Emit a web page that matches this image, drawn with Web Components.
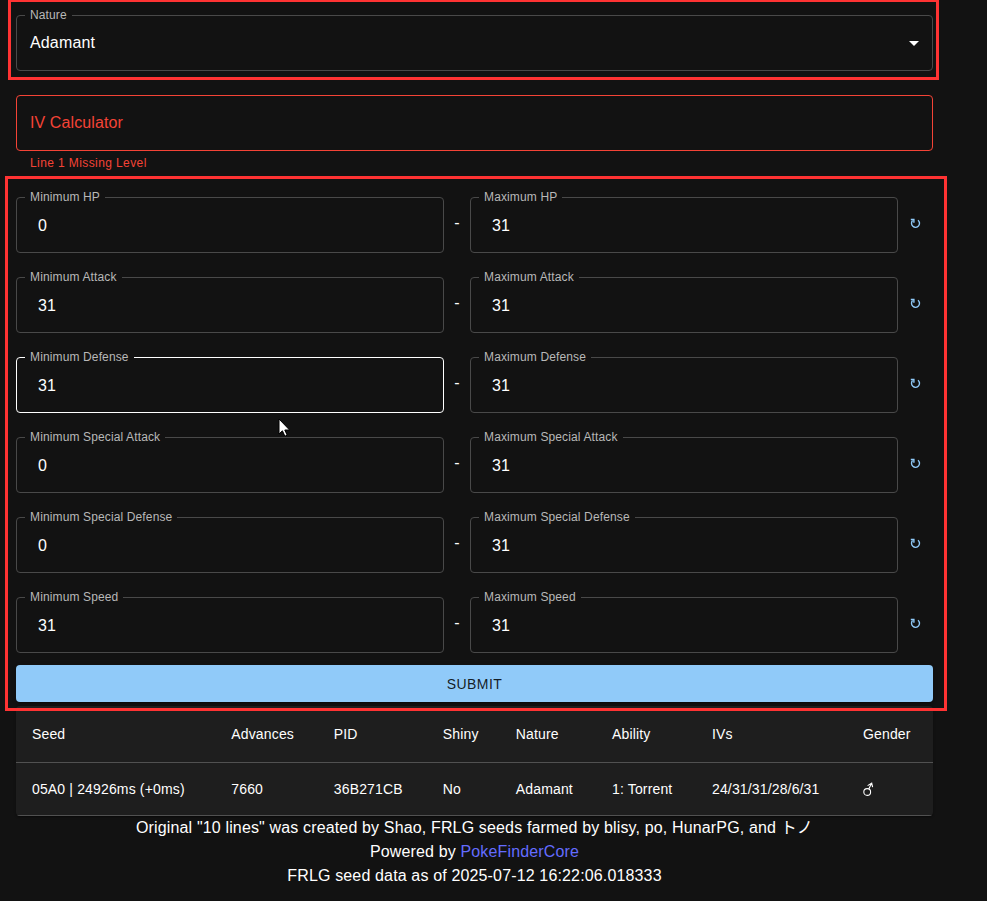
<!DOCTYPE html>
<html lang="en">
<head>
<meta charset="utf-8">
<title>Seed search</title>
<style>
html,body{margin:0;height:100%;background:#121212;overflow:hidden}
body{font-family:"Liberation Sans","Noto Sans CJK JP",sans-serif;font-size:16px;color:#fff}
</style>
</head>
<body>
<seed-app></seed-app>
<script>
const define = (name, render) => customElements.define(name, class extends HTMLElement {
  connectedCallback() {
    if (this.shadowRoot) return;
    this.attachShadow({mode: 'open'}).innerHTML = render(this);
  }
});

define('outlined-field', el => `
<style>
:host{display:flow-root;height:56px;box-sizing:border-box;--line:#494949}
:host([hovered]){--line:#fff}
:host([error]){--line:#f44336;color:#f44336}
fieldset{box-sizing:border-box;width:100%;height:61px;margin:-5px 0 0;padding:0 8px;min-width:0;border:1px solid var(--line);border-radius:4px}
fieldset.plain{height:56px;margin-top:0}
legend{height:11px;line-height:11px;padding:0 5px;font-size:12px;letter-spacing:.13px;color:#b8b8b8;white-space:nowrap}
.value{display:flex;align-items:center;justify-content:space-between;height:46px;line-height:24px;padding:0 13px}
.plain .value{height:54px;padding-left:5px;letter-spacing:.1px}
:host([select]) .value{padding:0 5px;height:43px;letter-spacing:.15px}
svg{display:block;margin-top:2px}
</style>
<fieldset class="${el.hasAttribute('label') ? '' : 'plain'}">
${el.hasAttribute('label') ? `<legend>${el.getAttribute('label')}</legend>` : ''}
<div class="value"><slot></slot>${el.hasAttribute('select') ? '<svg width="10" height="5" viewBox="0 0 10 5"><path d="M0 0h10L5 5z" fill="#fff"/></svg>' : ''}</div>
</fieldset>`);

define('reset-button', () => `
<style>
:host{display:flex;width:35px;height:53px;align-items:center;justify-content:center}
svg{display:block}
</style>
<svg width="11" height="11" viewBox="0 0 11 11" fill="none" stroke="#90caf9" stroke-width="1.4"><path d="M2.6 2.6A4 4 0 1 0 8 2.2"/><path d="M.8 1.5h3.1v3.2"/></svg>`);

define('iv-range', el => {
  const stat = el.getAttribute('stat');
  return `
<style>
:host{display:grid;grid-template-columns:428px 26px 428px 35px;height:56px}
.dash{height:52px;display:flex;align-items:center;justify-content:center}
</style>
<outlined-field label="Minimum ${stat}" ${el.hasAttribute('hovered') ? 'hovered' : ''}>${el.getAttribute('min')}</outlined-field>
<span class="dash">-</span>
<outlined-field label="Maximum ${stat}">31</outlined-field>
<reset-button></reset-button>`;
});

define('submit-button', () => `
<style>
:host{display:flex;align-items:center;justify-content:center;height:37px;box-sizing:border-box;padding-top:1px;border-radius:4px;background:#90caf9;color:rgba(0,0,0,.87);font-size:14px;letter-spacing:.4px;text-transform:uppercase;box-shadow:0 3px 1px -2px rgba(0,0,0,.2),0 2px 2px rgba(0,0,0,.14),0 1px 5px rgba(0,0,0,.12)}
</style><slot></slot>`);

define('result-table', () => `
<style>
:host{display:block;border-radius:4px;overflow:hidden;background:#1e1e1e;font-size:14px;letter-spacing:.15px;box-shadow:0 2px 1px -1px rgba(0,0,0,.2),0 1px 1px rgba(0,0,0,.14),0 1px 3px rgba(0,0,0,.12)}
.row{display:grid;grid-template-columns:199.3px 102.5px 109px 73px 96.2px 100px 151px 1fr;align-items:center;box-sizing:border-box;height:53px;border-bottom:1px solid #515151}
.head{height:57px}
.row span{padding-left:16px;white-space:nowrap}
svg{display:block}
</style>
<div class="row head"><span>Seed</span><span>Advances</span><span>PID</span><span>Shiny</span><span>Nature</span><span>Ability</span><span>IVs</span><span>Gender</span></div>
<div class="row"><span>05A0 | 24926ms (+0ms)</span><span>7660</span><span>36B271CB</span><span>No</span><span>Adamant</span><span>1: Torrent</span><span>24/31/31/28/6/31</span><span><svg role="img" aria-label="Male" width="11" height="14" viewBox="0 0 11 14" fill="none" stroke="#fff" stroke-width="1.1"><circle cx="4.2" cy="10" r="3.4"/><path d="M5.8 6.9L8.6 1.3M4.6 3.6L8.7 1.2L9.6 5.2"/></svg></span></div>`);

define('page-footer', () => `
<style>
:host{display:block;text-align:center;line-height:24px;letter-spacing:.15px}
a{color:#646cff;text-decoration:none}
</style>
<div>Original "10 lines" was created by Shao, FRLG seeds farmed by blisy, po, HunarPG, and トノ</div>
<div>Powered by <a href="#">PokeFinderCore</a></div>
<div>FRLG seed data as of 2025-07-12 16:22:06.018333</div>`);

define('mark-box', () => `
<style>:host{position:absolute;box-sizing:border-box;border:3px solid #f33;pointer-events:none}</style>`);

define('mouse-pointer', () => `
<style>:host{position:absolute}svg{display:block}</style>
<svg width="13" height="20" viewBox="0 0 13 20"><path d="M1 1v15l3.4-3.2 2.5 5.4 2.3-1-2.4-5.2h4.8z" fill="#fff" stroke="#000" stroke-width="1"/></svg>`);

define('seed-app', () => `
<style>
:host{display:block;position:relative;width:917px;padding:15px 0 0 16px}
.iv{margin-top:24px}
.help{height:20px;line-height:20px;margin:2px 14px 0;font-size:12px;letter-spacing:.4px;color:#f44336}
.ranges{display:grid;gap:24px;margin-top:24px}
submit-button{margin-top:12px}
result-table{margin-top:4px}
.a{left:8px;top:-1px;width:931px;height:81px}
.b{left:5px;top:176px;width:942px;height:535px}
mouse-pointer{left:278px;top:418px}
</style>
<outlined-field select label="Nature">Adamant</outlined-field>
<outlined-field class="iv" error>IV Calculator</outlined-field>
<div class="help">Line 1 Missing Level</div>
<div class="ranges">
<iv-range stat="HP" min="0"></iv-range>
<iv-range stat="Attack" min="31"></iv-range>
<iv-range stat="Defense" min="31" hovered></iv-range>
<iv-range stat="Special Attack" min="0"></iv-range>
<iv-range stat="Special Defense" min="0"></iv-range>
<iv-range stat="Speed" min="31"></iv-range>
</div>
<submit-button>Submit</submit-button>
<result-table></result-table>
<page-footer></page-footer>
<mark-box class="a"></mark-box>
<mark-box class="b"></mark-box>
<mouse-pointer></mouse-pointer>`);
</script>
</body>
</html>
